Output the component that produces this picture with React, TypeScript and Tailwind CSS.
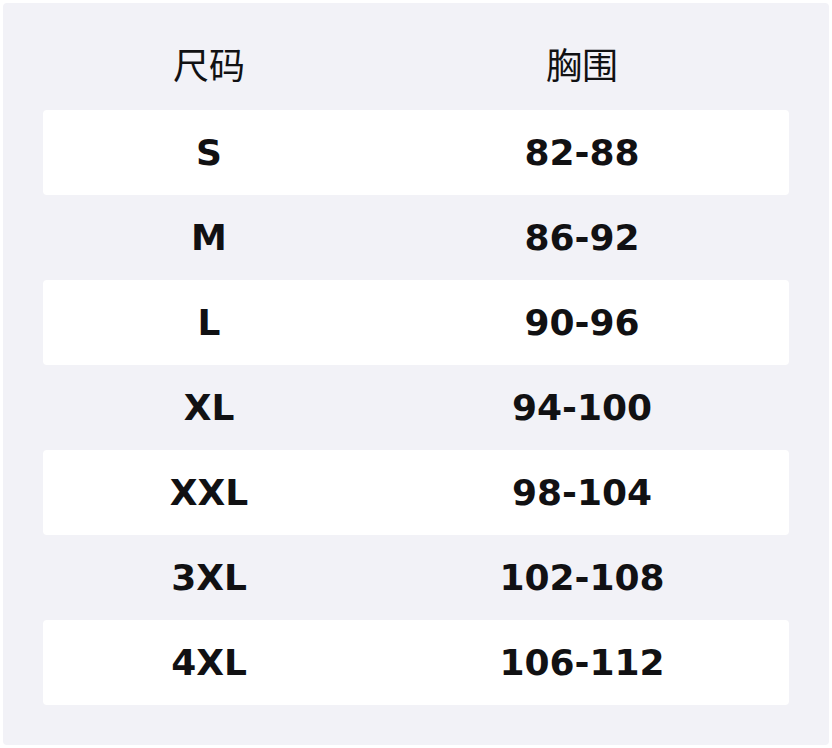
import React from 'react';

const rows = [
  { size: 'S', chest: '82-88' },
  { size: 'M', chest: '86-92' },
  { size: 'L', chest: '90-96' },
  { size: 'XL', chest: '94-100' },
  { size: 'XXL', chest: '98-104' },
  { size: '3XL', chest: '102-108' },
  { size: '4XL', chest: '106-112' },
];

const App: React.FC = () => {
  return (
    <div className="w-[832px] h-[748px] bg-white p-[3px]">
      <div className="h-full rounded bg-[#f2f2f7] px-10 pb-10 text-[#111113]">
        <div
          className="grid grid-cols-[332px_1fr] h-[107px] pt-[42px] text-[36px] leading-none"
          style={{ fontFamily: '"Noto Sans CJK SC", "Noto Sans", sans-serif' }}
        >
          <div className="text-center">尺码</div>
          <div className="text-center">胸围</div>
        </div>
        {rows.map((row, i) => (
          <div
            key={row.size}
            className={`grid grid-cols-[332px_1fr] items-center h-[85px] rounded-sm text-[36px] font-bold ${i % 2 === 0 ? 'bg-white' : ''}`}
            style={{ fontFamily: '"DejaVu Sans", sans-serif' }}
          >
            <div className="text-center">{row.size}</div>
            <div className="text-center">{row.chest}</div>
          </div>
        ))}
      </div>
    </div>
  );
};

export default App;
